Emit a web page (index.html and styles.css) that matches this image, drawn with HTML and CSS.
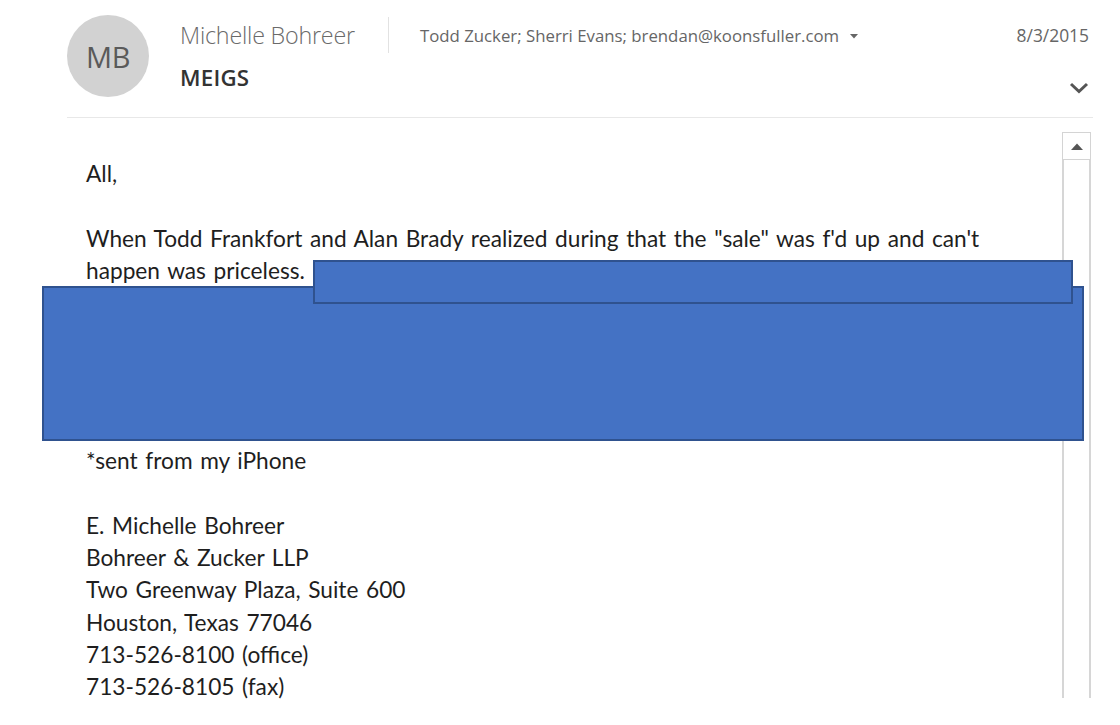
FILE: index.html
```html
<!DOCTYPE html>
<html lang="en">
<head>
<meta charset="utf-8">
<title>MEIGS</title>
<link rel="stylesheet" href="styles.css">
</head>
<body>
<header class="header">
  <div class="avatar">MB</div>
  <div class="head-main">
    <div class="row row-top">
      <span class="sender">Michelle Bohreer</span>
      <span class="sep"></span>
      <span class="recipients">Todd Zucker; Sherri Evans; brendan@koonsfuller.com</span>
      <svg class="caret" width="8" height="5" viewBox="0 0 8 5"><path d="M0 0h8L4 4.5z" fill="#666"/></svg>
      <span class="date">8/3/2015</span>
    </div>
    <div class="row row-sub">
      <span class="subject">MEIGS</span>
      <svg class="chevron" width="20" height="12" viewBox="0 0 20 12"><path d="M2 2l8 7.5L18 2" fill="none" stroke="#555" stroke-width="3"/></svg>
    </div>
  </div>
</header>
<main class="main">
  <div class="content">
    <div class="line">All,</div>
    <div class="line">&nbsp;</div>
    <div class="line">When Todd Frankfort and Alan Brady realized during that the "sale" was f'd up and can't</div>
    <div class="line">happen was priceless.</div>
    <div class="redacted-space"></div>
    <div class="line">*sent from my iPhone</div>
    <div class="line">&nbsp;</div>
    <div class="line">E. Michelle Bohreer</div>
    <div class="line">Bohreer &amp; Zucker LLP</div>
    <div class="line">Two Greenway Plaza, Suite 600</div>
    <div class="line">Houston, Texas 77046</div>
    <div class="line">713-526-8100 (office)</div>
    <div class="line">713-526-8105 (fax)</div>
  </div>
  <div class="scrollbar">
    <div class="scroll-btn"><svg width="12" height="7" viewBox="0 0 12 7"><path d="M0 7L6 0.5 12 7z" fill="#555"/></svg></div>
    <div class="scroll-track"></div>
  </div>
  <div class="redact redact-b"></div>
  <div class="redact redact-a"></div>
</main>
</body>
</html>
```

FILE: styles.css
```css
* { box-sizing: border-box; }
html, body { margin: 0; padding: 0; background: #fff; }
body { width: 1120px; height: 725px; overflow: hidden; font-family: "Open Sans", "Noto Sans", sans-serif; }

.header {
  display: flex;
  margin-left: 67px;
  width: 1026px;
  height: 118px;
  padding-top: 15px;
  border-bottom: 1px solid #e8e8e8;
}
.avatar {
  width: 82px;
  height: 82px;
  border-radius: 50%;
  background: #d2d2d2;
  color: #5a5a5a;
  font-size: 29px;
  display: flex;
  align-items: center;
  justify-content: center;
  letter-spacing: -0.5px;
}
.head-main { flex: 1; margin-left: 31px; padding-right: 4px; }
.row { display: flex; align-items: center; }
.row-top { height: 40px; }
.sender { font-size: 23.3px; color: #6a6a6a; font-weight: 300; letter-spacing: -0.2px; }
.sep { width: 1px; height: 36px; background: #e2e2e2; margin: 0 31px 0 33px; }
.recipients { font-size: 16.8px; color: #666; }
.caret { margin-left: 11px; margin-top: 2px; }
.date { margin-left: auto; font-size: 17.4px; color: #666; }
.row-sub { height: 36px; margin-top: 4px; }
.subject { font-size: 22.3px; font-weight: 600; color: #333; letter-spacing: 0.2px; }
.chevron { margin-left: auto; margin-top: 22px; margin-right: 0; }

.main { position: relative; display: flex; margin-top: 14px; height: 566px; }
.content {
  flex: 1;
  padding: 26px 0 0 86px;
  font-family: "Lato", "Open Sans", sans-serif;
  font-size: 22.7px;
  word-spacing: 1.8px;
  color: #1e1e1e;
}
.line { line-height: 32.3px; height: 32.3px; white-space: nowrap; }
.redacted-space { height: 158px; }

.scrollbar { width: 29px; margin-right: 29px; display: flex; flex-direction: column; }
.scroll-btn {
  height: 28px;
  border: 1px solid #d4d4d4;
  display: flex;
  align-items: center;
  justify-content: center;
}
.scroll-track { flex: 1; border-left: 2px solid #d6d6d6; border-right: 2px solid #d6d6d6; }

.redact {
  position: absolute;
  background: #4472c4;
  border: 2px solid #2f528f;
}
.redact-b { left: 42px; top: 154px; width: 1042px; height: 155px; }
.redact-a { left: 313px; top: 128px; width: 760px; height: 44px; }
```
